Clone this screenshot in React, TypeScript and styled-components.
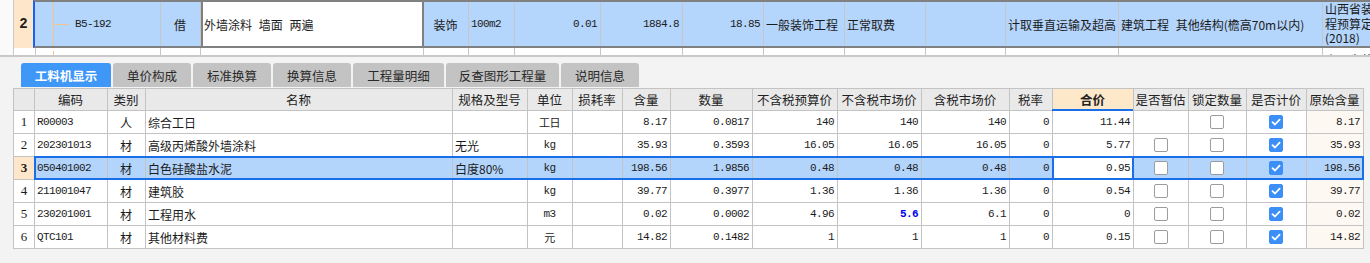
import React from 'react';
import styled, { createGlobalStyle, css } from 'styled-components';

const MONO = `"Liberation Mono", "Noto Sans CJK SC", monospace`;

const GlobalStyle = createGlobalStyle`
  * { box-sizing: border-box; }
  html, body { margin: 0; padding: 0; }
  body {
    width: 1370px;
    height: 263px;
    overflow: hidden;
    background: #f3f3f3;
    font-family: "Noto Sans CJK SC", "Liberation Sans", sans-serif;
    font-size: 12px;
    color: #1b1b1b;
  }
`;

// ---- top grid (parent list) ----
const TopGrid = styled.div`
  height: 57px;
  background: #fff;
  border-bottom: 2px solid #c9c9c9;
  overflow: hidden;
`;
const TopRow = styled.div<{ $peek?: boolean }>`
  display: flex;
  height: ${(p) => (p.$peek ? 7 : 48)}px;
`;
const Gutter = styled.div`
  flex: none;
  width: 14px;
  border-right: 1px solid #c9c9c9;
  background: #fafafa;
`;
const TopIndex = styled.div<{ $peek?: boolean }>`
  flex: none;
  width: 19px;
  display: flex;
  align-items: center;
  justify-content: center;
  background: ${(p) => (p.$peek ? '#fff' : '#fde6c9')};
  font: bold 14px ${MONO};
`;
const TopBody = styled.div<{ $peek?: boolean }>`
  display: flex;
  flex: none;
  ${(p) =>
    p.$peek
      ? css`
          border-left: 2px solid #fff;
          box-shadow: inset 1px 0 #c9c9c9;
        `
      : css`
          border-top: 2px solid #808080;
          border-bottom: 2px solid #808080;
          border-left: 2px solid #1463f3;
          background: #b4d5fc;
        `}
`;
const TopCell = styled.div<{ $w: number; $align?: string; $mono?: boolean; $edit?: boolean; $wrap?: boolean; $peek?: boolean }>`
  flex: none;
  width: ${(p) => p.$w}px;
  height: 100%;
  display: flex;
  align-items: ${(p) => (p.$peek ? 'flex-start' : 'center')};
  justify-content: ${(p) => (p.$align === 'right' ? 'flex-end' : p.$align === 'center' ? 'center' : 'flex-start')};
  padding: ${(p) => (p.$peek ? '3px 2px 0' : '0 3px 0 2px')};
  border-right: 1px solid #c6c6c6;
  overflow: hidden;
  white-space: ${(p) => (p.$wrap ? 'normal' : 'nowrap')};
  line-height: ${(p) => (p.$wrap ? '14.5px' : 'normal')};
  font-size: 12px;
  word-spacing: 4px;
  ${(p) =>
    p.$mono &&
    css`
      font-family: ${MONO};
      font-size: 11px;
      letter-spacing: -0.6px;
      word-spacing: 0;
    `}
  ${(p) =>
    p.$edit &&
    css`
      background: #fff;
      border-left: 2px solid #808080;
      border-right: 2px solid #808080;
      padding-left: 1px;
    `}
`;
const TreeGuide = styled.span<{ $branch?: boolean }>`
  position: relative;
  flex: none;
  align-self: stretch;
  width: 22px;
  margin-left: 16px;
  border-left: 1px solid #f6c28c;
  ${(p) =>
    p.$branch &&
    css`
      &::after {
        content: '';
        position: absolute;
        left: 0;
        top: 50%;
        width: 15px;
        border-top: 1px solid #f6c28c;
      }
    `}
`;

// ---- tabs ----
const Panel = styled.div`
  background: #f3f3f3;
`;
const TabBar = styled.div`
  display: flex;
  gap: 2px;
  height: 31px;
  padding: 6px 0 1px 21px;
`;
const Tab = styled.div<{ $w: number; $active?: boolean }>`
  flex: none;
  width: ${(p) => p.$w}px;
  height: 24px;
  display: flex;
  align-items: center;
  justify-content: center;
  border-radius: 3px 3px 0 0;
  font-size: 12.5px;
  background: ${(p) => (p.$active ? '#3f97f8' : '#c3c3c3')};
  color: ${(p) => (p.$active ? '#fff' : '#2a2a2a')};
  font-weight: ${(p) => (p.$active ? 700 : 400)};
`;

// ---- detail table ----
const Table = styled.div`
  width: 1351px;
  margin-left: 13px;
  border-top: 1px solid #c3c3c3;
  border-left: 1px solid #c3c3c3;
`;
const Row = styled.div<{ $head?: boolean; $sel?: boolean }>`
  display: flex;
  height: ${(p) => (p.$head ? 22 : 23)}px;
  border-bottom: 1px solid #c3c3c3;
  background: ${(p) => (p.$head ? '#e9e9e9' : p.$sel ? '#b4d5fb' : '#fff')};
`;
const RowNum = styled.div<{ $sel?: boolean; $head?: boolean }>`
  flex: none;
  width: 21px;
  display: flex;
  align-items: center;
  justify-content: center;
  border-right: 1px solid #c3c3c3;
  font-family: "Liberation Serif", serif;
  font-size: 13px;
  font-weight: ${(p) => (p.$sel ? 700 : 400)};
  background: ${(p) => (p.$sel ? '#fde6c9' : p.$head ? '#e9e9e9' : '#fff')};
`;
const RowBody = styled.div<{ $sel?: boolean }>`
  position: relative;
  display: flex;
  ${(p) =>
    p.$sel &&
    css`
      &::after {
        content: '';
        position: absolute;
        left: -1px;
        right: 0;
        top: -1px;
        bottom: -1px;
        border: 2px solid #1a6ee8;
        pointer-events: none;
      }
    `}
`;
const Cell = styled.div<{
  $w: number;
  $align: string;
  $mono?: boolean;
  $head?: boolean;
  $strong?: boolean;
  $hl?: boolean;
  $bg?: string;
  $current?: boolean;
}>`
  position: relative;
  flex: none;
  width: ${(p) => p.$w}px;
  display: flex;
  align-items: center;
  justify-content: ${(p) => (p.$align === 'right' ? 'flex-end' : p.$align === 'center' ? 'center' : 'flex-start')};
  padding: 0 3px 0 2px;
  border-right: 1px solid #c3c3c3;
  white-space: nowrap;
  overflow: visible;
  background: ${(p) => p.$bg ?? 'transparent'};
  ${(p) =>
    p.$mono &&
    css`
      font-family: ${MONO};
      font-size: 11px;
      letter-spacing: -0.6px;
    `}
  ${(p) =>
    p.$head &&
    css`
      justify-content: center;
      font-family: "Noto Sans CJK SC", sans-serif;
      font-size: 12.5px;
      letter-spacing: 0;
      color: #222;
    `}
  ${(p) =>
    p.$strong &&
    css`
      font-weight: 700;
      background: #fde8c9;
      &::after {
        content: '';
        position: absolute;
        left: -1px;
        right: 0;
        bottom: -1px;
        height: 2px;
        background: #1a6ee8;
      }
    `}
  ${(p) =>
    p.$hl &&
    css`
      color: #0000f0;
      font-weight: 700;
    `}
  ${(p) =>
    p.$current &&
    css`
      background: #fff;
      &::before {
        content: '';
        position: absolute;
        top: 0;
        bottom: 0;
        left: -1px;
        right: -1px;
        border-left: 2px solid #1a6ee8;
        border-right: 2px solid #1a6ee8;
      }
    `}
`;
const Check = styled.span<{ $on: boolean }>`
  width: 14px;
  height: 14px;
  border-radius: 2px;
  border: 1px solid ${(p) => (p.$on ? '#3b8ff6' : '#9c9c9c')};
  background: ${(p) => (p.$on ? '#3b8ff6' : '#fff')};
  display: flex;
  align-items: center;
  justify-content: center;
`;

type TopCol = { w: number; text: string; align?: string; mono?: boolean; edit?: boolean; wrap?: boolean; tree?: boolean };
const topCols: TopCol[] = [
  { w: 126, text: 'B5-192', mono: true, tree: true },
  { w: 40, text: '借', align: 'center' },
  { w: 223, text: '外墙涂料 墙面 两遍', edit: true },
  { w: 45, text: '装饰', align: 'center' },
  { w: 46, text: '100m2', mono: true },
  { w: 86, text: '0.01', align: 'right', mono: true },
  { w: 82, text: '1884.8', align: 'right', mono: true },
  { w: 81, text: '18.85', align: 'right', mono: true },
  { w: 81, text: '一般装饰工程' },
  { w: 81, text: '正常取费' },
  { w: 80, text: '' },
  { w: 113, text: '计取垂直运输及超高' },
  { w: 204, text: '建筑工程 其他结构(檐高70m以内)' },
  { w: 80, text: '山西省装饰工程预算定额(2018)', wrap: true },
];

const tabs = [
  { label: '工料机显示', w: 90 },
  { label: '单价构成', w: 78 },
  { label: '标准换算', w: 78 },
  { label: '换算信息', w: 78 },
  { label: '工程量明细', w: 91 },
  { label: '反查图形工程量', w: 113 },
  { label: '说明信息', w: 78 },
];

type Col = { key: string; title: string; w: number; align: 'left' | 'center' | 'right'; mono?: boolean; check?: boolean };
const cols: Col[] = [
  { key: 'code', title: '编码', w: 73, align: 'left', mono: true },
  { key: 'type', title: '类别', w: 38, align: 'center' },
  { key: 'name', title: '名称', w: 307, align: 'left' },
  { key: 'spec', title: '规格及型号', w: 75, align: 'left' },
  { key: 'unit', title: '单位', w: 45, align: 'center', mono: true },
  { key: 'loss', title: '损耗率', w: 50, align: 'right', mono: true },
  { key: 'qty', title: '含量', w: 48, align: 'right', mono: true },
  { key: 'amount', title: '数量', w: 82, align: 'right', mono: true },
  { key: 'budget', title: '不含税预算价', w: 85, align: 'right', mono: true },
  { key: 'market', title: '不含税市场价', w: 84, align: 'right', mono: true },
  { key: 'taxMarket', title: '含税市场价', w: 88, align: 'right', mono: true },
  { key: 'rate', title: '税率', w: 43, align: 'right', mono: true },
  { key: 'total', title: '合价', w: 81, align: 'right', mono: true },
  { key: 'est', title: '是否暂估', w: 55, align: 'center', check: true },
  { key: 'lock', title: '锁定数量', w: 58, align: 'center', check: true },
  { key: 'priced', title: '是否计价', w: 60, align: 'center', check: true },
  { key: 'orig', title: '原始含量', w: 57, align: 'right', mono: true },
];

type Item = Record<string, string | boolean | null>;
const items: Item[] = [
  { code: 'R00003', type: '人', name: '综合工日', spec: '', unit: '工日', loss: '', qty: '8.17', amount: '0.0817', budget: '140', market: '140', taxMarket: '140', rate: '0', total: '11.44', est: null, lock: false, priced: true, orig: '8.17' },
  { code: '202301013', type: '材', name: '高级丙烯酸外墙涂料', spec: '无光', unit: 'kg', loss: '', qty: '35.93', amount: '0.3593', budget: '16.05', market: '16.05', taxMarket: '16.05', rate: '0', total: '5.77', est: false, lock: false, priced: true, orig: '35.93' },
  { code: '050401002', type: '材', name: '白色硅酸盐水泥', spec: '白度80%', unit: 'kg', loss: '', qty: '198.56', amount: '1.9856', budget: '0.48', market: '0.48', taxMarket: '0.48', rate: '0', total: '0.95', est: false, lock: false, priced: true, orig: '198.56' },
  { code: '211001047', type: '材', name: '建筑胶', spec: '', unit: 'kg', loss: '', qty: '39.77', amount: '0.3977', budget: '1.36', market: '1.36', taxMarket: '1.36', rate: '0', total: '0.54', est: false, lock: false, priced: true, orig: '39.77' },
  { code: '230201001', type: '材', name: '工程用水', spec: '', unit: 'm3', loss: '', qty: '0.02', amount: '0.0002', budget: '4.96', market: '5.6', taxMarket: '6.1', rate: '0', total: '0', est: false, lock: false, priced: true, orig: '0.02' },
  { code: 'QTC101', type: '材', name: '其他材料费', spec: '', unit: '元', loss: '', qty: '14.82', amount: '0.1482', budget: '1', market: '1', taxMarket: '1', rate: '0', total: '0.15', est: false, lock: false, priced: true, orig: '14.82' },
];
const SELECTED = 2;

function CheckMark() {
  return (
    <svg width="10" height="10" viewBox="0 0 10 10">
      <path d="M1.5 5.2 L4 7.5 L8.6 2.6" fill="none" stroke="#fff" strokeWidth="1.8" strokeLinecap="round" strokeLinejoin="round" />
    </svg>
  );
}

function App() {
  return (
    <>
      <GlobalStyle />
      <TopGrid>
        <TopRow>
          <Gutter />
          <TopIndex>2</TopIndex>
          <TopBody>
            {topCols.map((c, i) => (
              <TopCell key={i} $w={c.w} $align={c.align} $mono={c.mono} $edit={c.edit} $wrap={c.wrap}>
                {c.tree && <TreeGuide $branch />}
                {c.text}
              </TopCell>
            ))}
          </TopBody>
        </TopRow>
        <TopRow $peek>
          <Gutter />
          <TopIndex $peek />
          <TopBody $peek>
            {topCols.map((c, i) => (
              <TopCell key={i} $w={c.w} $peek>
                {c.tree && <TreeGuide />}
                {c.wrap ? '山西省装饰工' : ''}
              </TopCell>
            ))}
          </TopBody>
        </TopRow>
      </TopGrid>
      <Panel>
        <TabBar>
          {tabs.map((t, i) => (
            <Tab key={t.label} $w={t.w} $active={i === 0}>
              {t.label}
            </Tab>
          ))}
        </TabBar>
        <Table>
          <Row $head>
            <RowNum $head />
            <RowBody>
              {cols.map((c) => (
                <Cell key={c.key} $w={c.w} $align="center" $head $strong={c.key === 'total'}>
                  {c.title}
                </Cell>
              ))}
            </RowBody>
          </Row>
          {items.map((it, r) => {
            const sel = r === SELECTED;
            return (
              <Row key={r} $sel={sel}>
                <RowNum $sel={sel}>{r + 1}</RowNum>
                <RowBody $sel={sel}>
                  {cols.map((c) => {
                    const v = it[c.key];
                    return (
                      <Cell
                        key={c.key}
                        $w={c.w}
                        $align={c.align}
                        $mono={c.mono}
                        $hl={c.key === 'market' && v === '5.6'}
                        $current={sel && c.key === 'total'}
                        $bg={c.key === 'orig' && !sel ? '#fdf8f2' : undefined}
                      >
                        {c.check ? v === null ? null : <Check $on={!!v}>{v ? <CheckMark /> : null}</Check> : (v as string)}
                      </Cell>
                    );
                  })}
                </RowBody>
              </Row>
            );
          })}
        </Table>
      </Panel>
    </>
  );
}

export default App;
